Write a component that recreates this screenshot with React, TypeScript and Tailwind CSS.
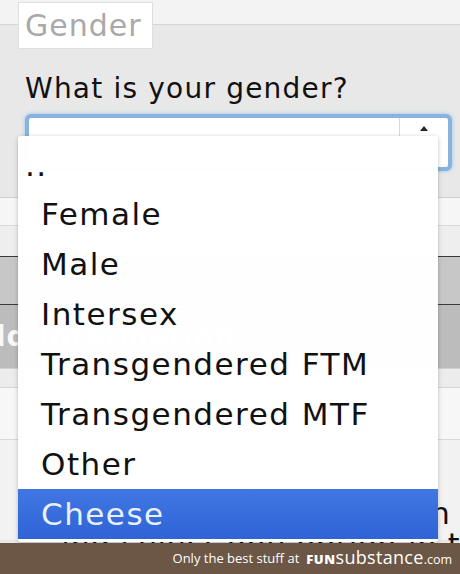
const options = ['Female', 'Male', 'Intersex', 'Transgendered FTM', 'Transgendered MTF', 'Other', 'Cheese']

export default function App() {
  return (
    <div className="w-[460px] h-[574px] flex flex-col overflow-hidden bg-[#e8e8e8] font-['DejaVu_Sans',Verdana,sans-serif]">
      <div className="relative h-[543px] overflow-hidden">
        {/* fieldset header */}
        <div className="h-[25px] bg-[#f3f3f3] border-b border-[#d4d4d4]" />
        <div className="-mt-[23px] pl-[18px]">
          <div className="w-[135px] h-[47px] bg-white border border-[#dedede] flex items-center pl-[6px]">
            <span className="text-[30px] leading-none tracking-[1px] text-[#a9a9a9]">Gender</span>
          </div>
        </div>

        <p className="mt-[23px] pl-[25px] text-[28px] leading-[34px] tracking-[1.2px] text-[#111]">What is your gender?</p>

        <div className="mt-[8px] ml-[25px] w-[427px] h-[57px] rounded-[6px] border-[4px] border-[#86b4de] shadow-[0_0_4px_#9cc3e6] bg-white flex">
          <div className="flex-1 border-r border-[#d8d8d8]" />
          <div className="w-[48px] flex flex-col items-center pt-[8px] gap-[12px]">
            <span className="w-0 h-0 border-l-[4px] border-r-[4px] border-b-[5px] border-l-transparent border-r-transparent border-b-[#222]" />
            <span className="w-0 h-0 border-l-[4px] border-r-[4px] border-t-[5px] border-l-transparent border-r-transparent border-t-[#bbb]" />
          </div>
        </div>

        {/* form rows behind the menu */}
        <div className="mt-[26px] h-[28px] bg-[#f6f6f6] border-t border-[#cfcfcf]" />
        <div className="h-[31px] bg-[#eeeeee] border-t border-[#d9d9d9]" />
        <div className="h-[48px] bg-[#c7c7c7] border-t border-[#3a3a3a]" />
        <div className="h-[64px] bg-[#bcbcbc] border-t border-[#3a3a3a] flex items-center">
          <span className="-ml-[4px] text-[28px] font-bold text-white/90 tracking-[1px] whitespace-nowrap">ld Information</span>
        </div>
        <div className="h-[19px] bg-[#ececec] border-t border-[#d0d0d0]" />
        <div className="h-[52px] bg-[#f7f7f7] border-t border-[#d6d6d6]" />
        <div className="h-[101px] bg-[#f2f2f2] border-t border-[#d8d8d8] flex flex-col">
          <span className="-mt-[6px] pl-[28px] text-[26px] leading-[26px] text-[#c8c8c8] whitespace-nowrap">Time Zone</span>
          <div className="mt-[38px] flex justify-end -mr-[14px]">
            <span className="text-[30px] leading-[32px] text-[#111] whitespace-nowrap tracking-[1px]">the one you are given in t</span>
          </div>
          <div className="flex justify-end -mr-[40px]">
            <span className="text-[30px] leading-[30px] text-[#111] whitespace-nowrap tracking-[1px]">and select one option in the</span>
          </div>
        </div>

        {/* open select menu */}
        <div className="absolute left-[18px] top-[136px] w-[420px] h-[406px] bg-white/[0.985] rounded-[3px] shadow-[0_1px_4px_rgba(0,0,0,0.25)] pb-[3px] text-[31px] tracking-[1.5px] text-[#111]">
          <div className="h-[53px] pt-[4px] pl-[7px] leading-[50px]">..</div>
          {options.map((o) => (
            <div
              key={o}
              className={
                o === 'Cheese'
                  ? 'h-[50px] leading-[50px] pl-[23px] bg-gradient-to-b from-[#4177e3] to-[#2f63d6] text-[#eaf0ff]'
                  : 'h-[50px] leading-[50px] pl-[23px]'
              }
            >
              {o}
            </div>
          ))}
        </div>
      </div>

      <div className="flex-1 bg-[#6c5645] flex items-center justify-end pr-[8px] gap-[7px] text-white font-['Open_Sans',sans-serif]">
        <span className="text-[13px]">Only the best stuff at</span>
        <span className="flex items-baseline">
          <span className="text-[13px] font-extrabold tracking-[0.5px]">FUN</span>
          <span className="text-[18px] leading-none tracking-[0.3px]">substance</span>
          <span className="text-[12.5px]">.com</span>
        </span>
      </div>
    </div>
  )
}
